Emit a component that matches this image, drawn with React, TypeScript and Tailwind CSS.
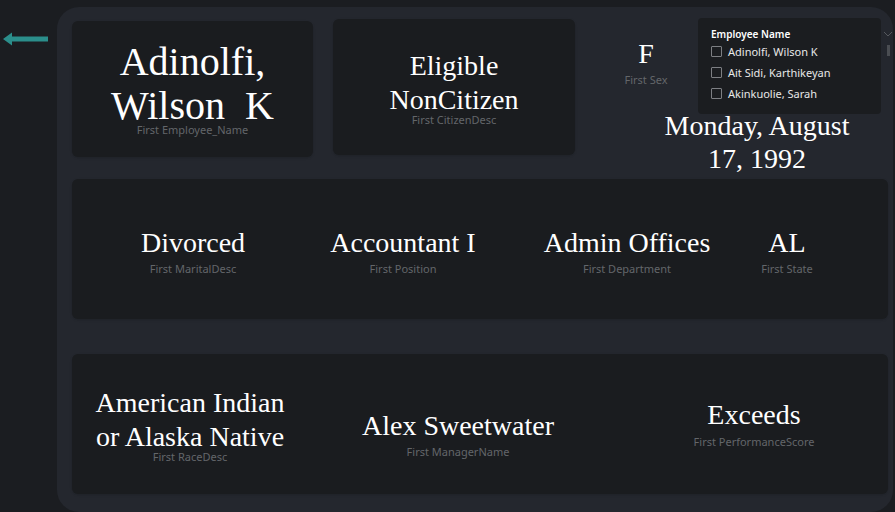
import React from "react";

const serif = "font-['Liberation_Serif','Times_New_Roman',serif] text-white";
const label = "font-['Noto_Sans','Liberation_Sans',sans-serif] text-[11px] leading-[14px] text-[#63666a] whitespace-nowrap";

function Value({ text, sub, w, pt, gap = 2 }: { text: string; sub: string; w: number; pt: number; gap?: number }) {
  return (
    <div className="flex flex-col items-center shrink-0" style={{ width: w, paddingTop: pt }}>
      <div className={`${serif} text-[28px] leading-[34px] whitespace-nowrap`}>{text}</div>
      <div className={label} style={{ marginTop: gap }}>{sub}</div>
    </div>
  );
}

const slicerItems = ["Adinolfi, Wilson K", "Ait Sidi, Karthikeyan", "Akinkuolie, Sarah"];

export default function App() {
  return (
    <div className="w-[895px] h-[512px] bg-[#1b1d21] flex overflow-hidden">
      {/* back arrow */}
      <div className="w-[57px] shrink-0 pt-[32px] pl-[3px]">
        <svg width="46" height="14" viewBox="0 0 46 14">
          <path d="M0 7 L9 0.5 L9 4.5 L45 4.5 L45 9.5 L9 9.5 L9 13.5 Z" fill="#2b8e8b" />
        </svg>
      </div>

      <div className="relative mt-[7px] w-[836px] h-[505px] shrink-0 rounded-[22px] bg-[#24272e]">
        {/* top row */}
        <div className="flex items-start h-[172px]">
          <div className="ml-[15px] mt-[14px] w-[241px] h-[136px] rounded-md bg-[#1a1c1f] flex flex-col items-center pt-[19px] shadow-sm">
            <div className={`${serif} text-[40px] leading-[44px] text-center whitespace-pre`}>
              Adinolfi,{"\n"}Wilson  K
            </div>
            <div className={`${label} -mt-[5px]`}>First Employee_Name</div>
          </div>

          <div className="ml-[20px] mt-[12px] w-[242px] h-[136px] rounded-md bg-[#1a1c1f] flex flex-col items-center pt-[30px] shadow-sm">
            <div className={`${serif} text-[28px] leading-[34px] text-center`}>
              Eligible
              <br />
              NonCitizen
            </div>
            <div className={`${label} -mt-[4px]`}>First CitizenDesc</div>
          </div>

          <div className="flex flex-col w-[318px]">
            <div className="ml-[30px] w-[82px] mt-[30px] flex flex-col items-center">
              <div className={`${serif} text-[28px] leading-[34px]`}>F</div>
              <div className={`${label} mt-[2px]`}>First Sex</div>
            </div>
            <div className={`ml-[72px] w-[220px] mt-[22px] ${serif} text-[28px] leading-[33px] text-center`}>
              Monday, August
              <br />
              17, 1992
            </div>
          </div>
        </div>

        {/* row 2 */}
        <div className="ml-[15px] w-[816px] h-[140px] rounded-md bg-[#1a1c1f] flex items-start shadow-sm">
          <Value text="Divorced" sub="First MaritalDesc" w={242} pt={47} />
          <Value text="Accountant I" sub="First Position" w={178} pt={47} />
          <div className="w-[20px] shrink-0" />
          <Value text="Admin Offices" sub="First Department" w={230} pt={47} />
          <Value text="AL" sub="First State" w={90} pt={47} />
        </div>

        {/* row 3 */}
        <div className="ml-[15px] mt-[35px] w-[816px] h-[140px] rounded-md bg-[#1a1c1f] flex items-start shadow-sm">
          <div className="w-[236px] shrink-0 flex flex-col items-center pt-[32px]">
            <div className={`${serif} text-[28px] leading-[34px] text-center whitespace-nowrap`}>
              American Indian
              <br />
              or Alaska Native
            </div>
            <div className={`${label} -mt-[4px]`}>First RaceDesc</div>
          </div>
          <Value text="Alex Sweetwater" sub="First ManagerName" w={300} pt={55} gap={2} />
          <div className="w-[46px] shrink-0" />
          <Value text="Exceeds" sub="First PerformanceScore" w={200} pt={44} gap={3} />
        </div>

        {/* slicer overlay */}
        <div className="absolute left-[641px] top-[11px] w-[183px] h-[96px] rounded bg-[#1b1d20] pl-[13px] pt-[9px] font-['Noto_Sans','Liberation_Sans',sans-serif]">
          <div className="text-[10px] leading-[14px] font-semibold text-white">Employee Name</div>
          {slicerItems.map((n) => (
            <div key={n} className="h-[21px] flex items-center gap-[6px]">
              <span className="w-[11px] h-[11px] border border-[#7d7f83] rounded-[1px] shrink-0" />
              <span className="text-[11px] leading-[14px] text-[#e8e8e8] whitespace-nowrap">{n}</span>
            </div>
          ))}
        </div>
        <svg className="absolute left-[826px] top-[23px]" width="10" height="8" viewBox="0 0 10 8">
          <path d="M1 2 L5 6 L9 2" stroke="#55585d" strokeWidth="1" fill="none" />
        </svg>
        <div className="absolute left-[830px] top-[38px] w-[3px] h-[11px] bg-[#4a4d52]" />
      </div>
    </div>
  );
}
